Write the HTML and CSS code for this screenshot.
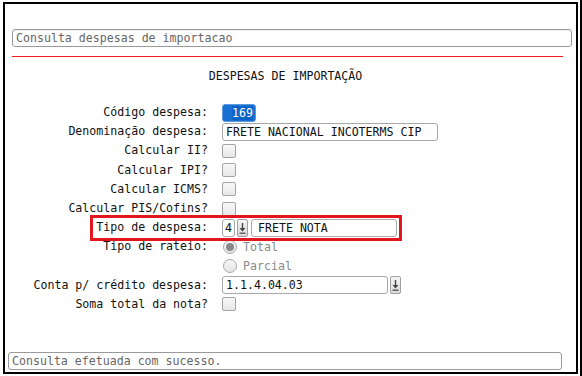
FILE: index.html
```html
<!DOCTYPE html>
<html lang="pt-BR">
<head>
	<meta charset="UTF-8">
	<title>Despesas de importacao</title>
	<link rel="stylesheet" href="styles.css">
</head>
<body>
	<div class="page">
		<div class="frame">
			<div class="box titlebox">Consulta despesas de importacao</div>
			<div class="redline"></div>
			<h2 class="title">DESPESAS DE IMPORTAÇÃO</h2>

			<div class="form">
				<label>Código despesa:</label>
				<div class="field"><div class="box code"><span class="sel">169</span></div></div>

				<label>Denominação despesa:</label>
				<div class="field"><div class="box name">FRETE NACIONAL INCOTERMS CIP</div></div>

				<label>Calcular II?</label>
				<div class="field"><span class="check"></span></div>

				<label>Calcular IPI?</label>
				<div class="field"><span class="check"></span></div>

				<label>Calcular ICMS?</label>
				<div class="field"><span class="check"></span></div>

				<label>Calcular PIS/Cofins?</label>
				<div class="field"><span class="check"></span></div>

				<label>Tipo de despesa:</label>
				<div class="field">
					<div class="box tipo">4</div>
					<span class="drop">
						<svg width="9" height="14" viewBox="0 0 9 14"><path d="M4.5 2v6" stroke="#444" stroke-width="1.4"/><path d="M1.5 7h6l-3 3.5z" fill="#444"/><path d="M1.5 12.2h6" stroke="#444" stroke-width="1.2"/></svg>
					</span>
					<div class="box tipodesc">FRETE NOTA</div>
				</div>

				<label>Tipo de rateio:</label>
				<div class="field"><span class="radio on"></span><span class="opt">Total</span></div>

				<label></label>
				<div class="field"><span class="radio"></span><span class="opt">Parcial</span></div>

				<label>Conta p/ crédito despesa:</label>
				<div class="field">
					<div class="box conta">1.1.4.04.03</div>
					<span class="drop">
						<svg width="9" height="14" viewBox="0 0 9 14"><path d="M4.5 2v6" stroke="#444" stroke-width="1.4"/><path d="M1.5 7h6l-3 3.5z" fill="#444"/><path d="M1.5 12.2h6" stroke="#444" stroke-width="1.2"/></svg>
					</span>
				</div>

				<label>Soma total da nota?</label>
				<div class="field"><span class="check"></span></div>
			</div>

			<div class="mark"></div>

			<div class="box status">Consulta efetuada com sucesso.</div>
		</div>
	</div>
</body>
</html>
```

FILE: styles.css
```css
*{
	margin: 0;
	padding: 0;
	box-sizing: border-box;
}
body{
	font-family: 'DejaVu Sans Mono', 'Liberation Mono', monospace;
	font-size: 11.6px;
	color: #111;
	background-color: #fff;
}
.page{
	width: 582px;
	height: 376px;
	padding: 2px 0 2px 3px;
	border-right: 2px solid #000;
}
.frame{
	position: relative;
	width: 575px;
	height: 372px;
	border: 2px solid #000;
	display: flex;
	flex-direction: column;
}
.box{
	height: 18px;
	line-height: 16px;
	padding: 0 3px;
	border: 1px solid #a8a8a8;
	border-radius: 3px;
	background-color: #fff;
	white-space: nowrap;
	overflow: hidden;
}
.titlebox{
	width: 560px;
	margin: 25px 0 0 7px;
	color: #666;
	border-color: #9a9a9a;
	box-shadow: inset 0 1px 1px rgba(0,0,0,.08);
}
.redline{
	width: 551px;
	height: 1px;
	margin: 9px 0 0 7px;
	background-color: #ee1c1c;
}
.title{
	font-size: 11.6px;
	font-weight: normal;
	line-height: 18px;
	text-align: center;
	margin-top: 10px;
	padding-right: 10px;
}
.form{
	display: grid;
	grid-template-columns: 203px 1fr;
	grid-auto-rows: 19.2px;
	column-gap: 14px;
	margin-top: 18px;
}
.form>label{
	text-align: right;
	line-height: 19px;
	white-space: nowrap;
}
.field{
	display: flex;
	align-items: center;
	gap: 2px;
}
.code{
	width: 34px;
	text-align: right;
	padding: 0 2px;
	border-color: #5b9ae0;
	background-color: #1a6fd2;
}
.sel{
	color: #fff;
	background-color: #0a64c8;
}
.name{
	width: 216px;
}
.check{
	display: inline-block;
	width: 14px;
	height: 14px;
	border: 1px solid #a4a4a4;
	border-radius: 2px;
	background: linear-gradient(#f7f7f7, #e8e8e8);
}
.tipo{
	width: 13px;
	padding: 0 1px;
	text-align: center;
}
.tipodesc{
	width: 146px;
	margin-left: 1px;
	padding-left: 6px;
}
.drop{
	display: inline-flex;
	align-items: center;
	justify-content: center;
	width: 11px;
	height: 18px;
	border: 1px solid #a0a0a0;
	border-radius: 2px;
	background: linear-gradient(#f6f6f6, #dadada);
}
.conta{
	width: 166px;
}
.radio{
	display: inline-flex;
	align-items: center;
	justify-content: center;
	width: 14px;
	height: 14px;
	margin-left: 1px;
	border: 1px solid #aaa;
	border-radius: 50%;
	background: linear-gradient(#f6f6f6, #e4e4e4);
}
.radio.on::after{
	content: '';
	width: 8px;
	height: 8px;
	border-radius: 50%;
	background-color: #888;
}
.opt{
	color: #8a8a8a;
	margin-left: 4px;
}
.mark{
	position: absolute;
	left: 85px;
	top: 211px;
	width: 312px;
	height: 26px;
	border: 3px solid #e3161e;
}
.status{
	width: 554px;
	margin: auto 0 2px 3px;
	color: #666;
	border-color: #9a9a9a;
}
```
